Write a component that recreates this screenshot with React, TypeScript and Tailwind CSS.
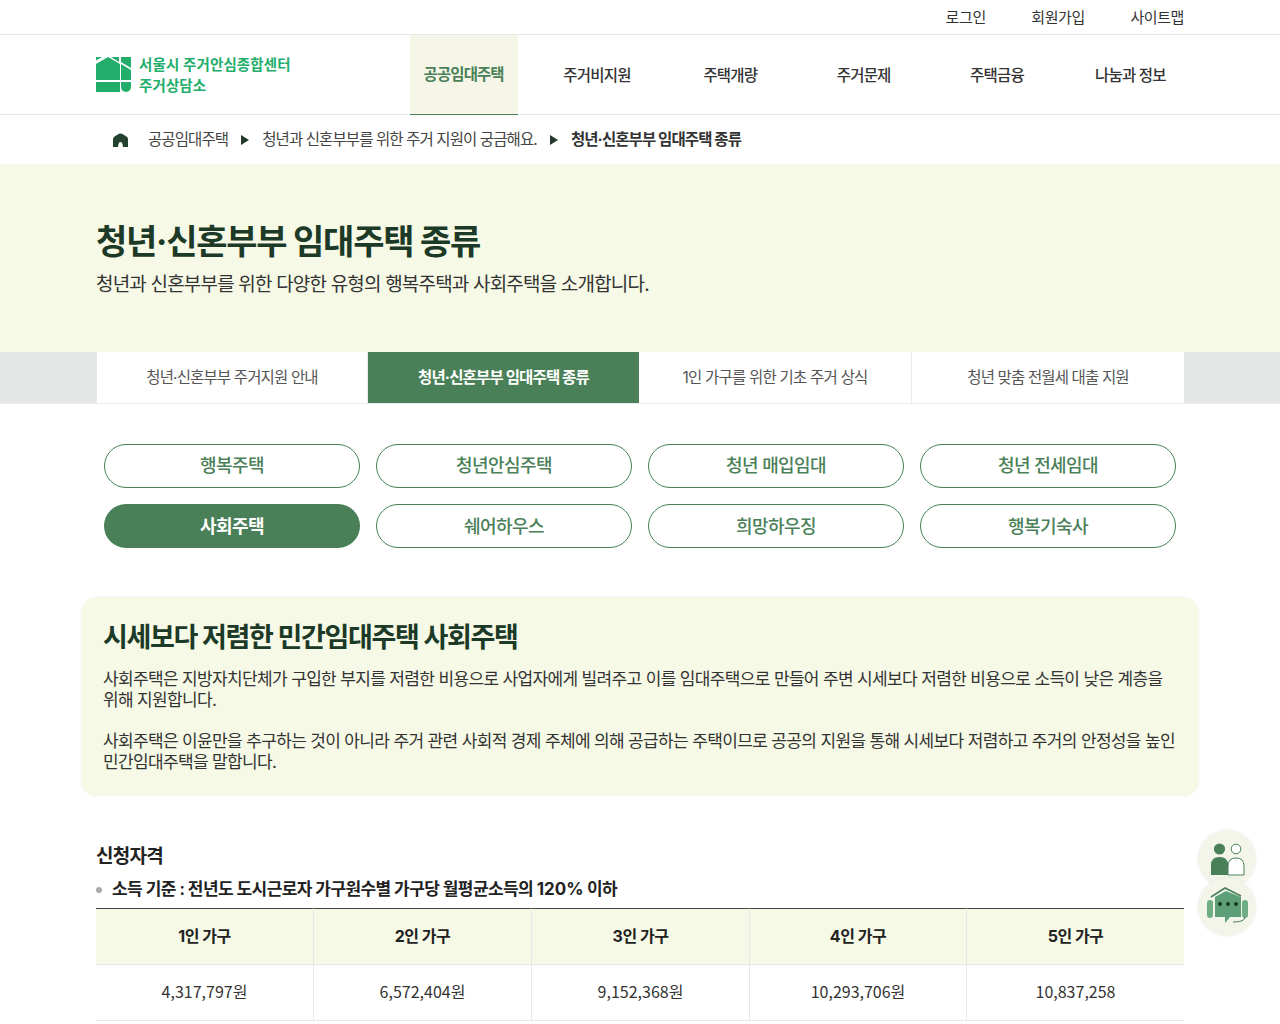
const font = { fontFamily: '"Inter","Noto Sans CJK KR",sans-serif' };
const digitFont = { fontFamily: '"Noto Sans CJK KR","Noto Sans",sans-serif' };

const navItems = ["공공임대주택", "주거비지원", "주택개량", "주거문제", "주택금융", "나눔과 정보"];
const tabs = ["청년·신혼부부 주거지원 안내", "청년·신혼부부 임대주택 종류", "1인 가구를 위한 기초 주거 상식", "청년 맞춤 전월세 대출 지원"];
const pills = ["행복주택", "청년안심주택", "청년 매입임대", "청년 전세임대", "사회주택", "쉐어하우스", "희망하우징", "행복기숙사"];
const heads = ["1인 가구", "2인 가구", "3인 가구", "4인 가구", "5인 가구"];
const vals = ["4,317,797원", "6,572,404원", "9,152,368원", "10,293,706원", "10,837,258"];

function Logo() {
  return (
    <svg width="36" height="36" viewBox="0 0 36 36" className="shrink-0">
      <path d="M0 7 L12 0 L24 7 V23 H0 Z" fill="#22ad6b" />
      <path d="M0 25 H24 V35 H0 Z" fill="#22ad6b" />
      <path d="M15 0 H23 V5 Z" fill="#22ad6b" />
      <path d="M25 0 H35 V11 L25 5 Z" fill="#22ad6b" />
      <path d="M25 7 L35 13 V23 H25 Z" fill="#22ad6b" />
      <path d="M0 0 H6 L0 3.5 Z" fill="#22ad6b" />
      <path d="M25 25 H35 V30 A5 5 0 0 1 30 35 A5 5 0 0 1 25 30 Z" fill="#22ad6b" />
    </svg>
  );
}

function Arrow() {
  return <span className="w-0 h-0 border-y-[5.5px] border-y-transparent border-l-[8px] border-l-[#24382c] shrink-0" />;
}

function Floating() {
  return (
    <div className="absolute left-[1198px] top-[830px] w-[60px] h-[108px] z-10">
      <div className="absolute left-0 top-0 w-[58px] h-[58px] rounded-full bg-[#f3f5ea] shadow-[0_0_3px_rgba(0,0,0,0.08)] flex items-center justify-center">
        <svg width="36" height="36" viewBox="0 0 36 36">
          <circle cx="10.5" cy="8" r="5.6" fill="#4a8058" />
          <path d="M2 34 V24 Q2 16 10.5 16 Q19 16 19 24 V34 Z" fill="#4a8058" />
          <circle cx="27" cy="8" r="4.8" fill="#fff" stroke="#4a8058" strokeWidth="1" />
          <path d="M19 34 V25 Q19 17 27 17 Q35 17 35 25 V34 Z" fill="#fff" stroke="#4a8058" strokeWidth="1" />
        </svg>
      </div>
      <div className="absolute left-0 top-[48px] w-[58px] h-[58px] rounded-full bg-[#f3f5ea] shadow-[0_0_3px_rgba(0,0,0,0.08)] flex items-center justify-center">
        <svg width="44" height="44" viewBox="0 0 44 44">
          <path d="M6 12 L20 3 L36 11" fill="none" stroke="#4a8058" strokeWidth="1.6" />
          <rect x="2" y="15" width="6" height="18" rx="3" fill="#6fae84" />
          <rect x="37" y="15" width="6" height="18" rx="3" fill="#6fae84" />
          <path d="M10 12 L21 6 L36 12 V32 H25 L20 38 V32 H10 Z" fill="#5da078" />
          <path d="M40 32 Q40 37 28 37" fill="none" stroke="#4a8058" strokeWidth="1" />
          <circle cx="15" cy="19" r="2" fill="#123a22" />
          <circle cx="23" cy="19" r="2" fill="#123a22" />
          <circle cx="31" cy="19" r="2" fill="#123a22" />
        </svg>
      </div>
    </div>
  );
}

export default function App() {
  return (
    <div className="relative w-[1280px] h-[1024px] overflow-hidden bg-white text-[#222]" style={font}>
      <Floating />
      <div className="h-[35px] border-b border-[#e6e8e8]">
        <div className="w-[1088px] mx-auto h-[34px] pt-[2px] flex justify-end items-center gap-[45.5px] text-[15px] tracking-[-0.4px] text-[#333]">
          <span>로그인</span><span>회원가입</span><span>사이트맵</span>
        </div>
      </div>
      <div className="h-[80px] border-b border-[#e6e8e8]">
        <div className="w-[1088px] mx-auto h-full flex">
          <div className="w-[301px] shrink-0 flex items-center gap-[7px]">
            <Logo />
            <div className="text-[14.5px] leading-[21px] font-semibold text-[#22ad6b] tracking-[0.1px]">
              <div>서울시 주거안심종합센터</div>
              <div>주거상담소</div>
            </div>
          </div>
          <div className="w-[800px] shrink-0 grid grid-cols-6">
            {navItems.map((n, i) => (
              <div key={n} className="flex justify-center">
                <div className={i === 0
                  ? "w-[108px] h-[80px] pt-[1px] bg-[#f5f6e8] border-b border-[#4a8058] flex items-center justify-center text-[15.5px] font-semibold text-[#4a8058] tracking-[-0.9px]"
                  : "h-[80px] pt-[1px] flex items-center justify-center text-[15.5px] font-medium text-[#333] tracking-[-0.8px]"}>
                  {n}
                </div>
              </div>
            ))}
          </div>
        </div>
      </div>
      <div className="h-[49px]">
        <div className="w-[1088px] mx-auto h-full flex items-center pl-[17px] text-[15.5px] tracking-[-0.9px] text-[#444]">
          <svg width="15" height="14" viewBox="0 0 15 14" className="shrink-0 mr-[20px]">
            <path d="M0 14 V6 Q0 4.5 1.5 3.5 L6 .8 Q7.5 0 9 .8 L13.5 3.5 Q15 4.5 15 6 V14 H10 L9.5 11 Q9 9 7.5 9 Q6 9 5.5 11 L5 14 Z" fill="#24412e" />
          </svg>
          <span>공공임대주택</span>
          <span className="mx-[13px] flex"><Arrow /></span>
          <span>청년과 신혼부부를 위한 주거 지원이 궁금해요.</span>
          <span className="mx-[13px] flex"><Arrow /></span>
          <span className="font-bold text-[#333]">청년·신혼부부 임대주택 종류</span>
        </div>
      </div>
      <div className="h-[188px] bg-[#f5f9e6]">
        <div className="w-[1088px] mx-auto pt-[53px]">
          <h1 className="text-[34px] leading-[50px] font-bold text-[#1c3a27] tracking-[-1.25px]">청년·신혼부부 임대주택 종류</h1>
          <p className="mt-[4px] text-[19px] leading-[28px] text-[#333] tracking-[-0.82px]">청년과 신혼부부를 위한 다양한 유형의 행복주택과 사회주택을 소개합니다.</p>
        </div>
      </div>
      <div className="h-[52px] bg-[#e5e7e6] border-b border-[#ececec]">
        <div className="w-[1087px] ml-[97px] h-[51px] grid grid-cols-[271px_271px_273px_272px] bg-white">
          {tabs.map((t, i) => (
            <div key={t} className={i === 1
              ? "flex items-center justify-center bg-[#4a8058] text-white font-bold text-[15.5px] tracking-[-0.85px]"
              : i === 2
                ? "flex items-center justify-center text-[#555] text-[15.5px] tracking-[-0.78px] border-r border-[#ececec]"
                : i === 3
                  ? "flex items-center justify-center text-[#555] text-[15.5px] tracking-[-0.85px]"
                  : "flex items-center justify-center text-[#555] text-[15.5px] tracking-[-0.85px] border-r border-[#ececec]"}>
              {t}
            </div>
          ))}
        </div>
      </div>
      <div className="w-[1072px] mx-auto mt-[40px] grid grid-cols-4 gap-x-[16px] gap-y-[16px]">
        {pills.map((p, i) => (
          <div key={p} className={i === 4
            ? "h-[44px] rounded-full bg-[#4a8058] text-white font-semibold text-[18px] tracking-[-0.6px] flex items-center justify-center"
            : i < 4
              ? "h-[44px] pb-[2px] rounded-full border border-[#4a8058] bg-white text-[#4a8058] font-medium text-[18px] tracking-[-0.6px] flex items-center justify-center"
              : "h-[44px] rounded-full border border-[#4a8058] bg-white text-[#4a8058] font-medium text-[18px] tracking-[-0.6px] flex items-center justify-center"}>
            {p}
          </div>
        ))}
      </div>
      <div className="w-[1118px] ml-[81px] mt-[49px] h-[199px] rounded-[16px] bg-[#f5f9e6] shadow-[0_0_3px_rgba(0,0,0,0.05)] pl-[22px] pr-[20px] pt-[21px]">
        <h2 className="text-[27px] leading-[40px] font-bold text-[#1c3a27] tracking-[-1.35px]">시세보다 저렴한 민간임대주택 사회주택</h2>
        <div className="mt-[11px] text-[17px] leading-[20.67px] text-[#333] tracking-[-0.65px]">
          <p className="mb-[20.67px]">사회주택은 지방자치단체가 구입한 부지를 저렴한 비용으로 사업자에게 빌려주고 이를 임대주택으로 만들어 주변 시세보다 저렴한 비용으로 소득이 낮은 계층을 위해 지원합니다.</p>
          <p>사회주택은 이윤만을 추구하는 것이 아니라 주거 관련 사회적 경제 주체에 의해 공급하는 주택이므로 공공의 지원을 통해 시세보다 저렴하고 주거의 안정성을 높인 민간임대주택을 말합니다.</p>
        </div>
      </div>
      <div className="w-[1088px] mx-auto mt-[46px]">
        <h3 className="text-[19px] leading-[30px] font-bold text-[#222] tracking-[-0.75px]">신청자격</h3>
        <div className="mt-[6px] h-[24px] flex items-center gap-[10px]">
          <span className="w-[6px] h-[6px] rounded-full bg-[#aaa] shrink-0" />
          <span className="text-[17px] font-semibold text-[#222] tracking-[-0.62px]">소득 기준 : 전년도 도시근로자 가구원수별 가구당 월평균소득의 <span className="font-bold tracking-normal">120%</span> 이하</span>
        </div>
        <div className="mt-[6px] grid grid-cols-[218px_218px_218px_217px_217px]">
          {heads.map((h, i) => (
            <div key={h} className={"h-[57px] pb-[1px] bg-[#f5f9e6] border-t border-t-[#444] border-b border-b-[#e6e8e8] flex items-center justify-center text-[16px] font-bold text-[#222] tracking-[-0.5px]" + (i < 4 ? " border-r border-r-[#e6e8e8]" : "")}>{h}</div>
          ))}
          {vals.map((v, i) => (
            <div key={v} style={digitFont} className={"h-[56px] pb-[4px] border-b border-[#e6e8e8] flex items-center justify-center text-[16px] text-[#333]" + (i < 4 ? " border-r border-r-[#e6e8e8]" : "")}>{v}</div>
          ))}
        </div>
      </div>
    </div>
  );
}
